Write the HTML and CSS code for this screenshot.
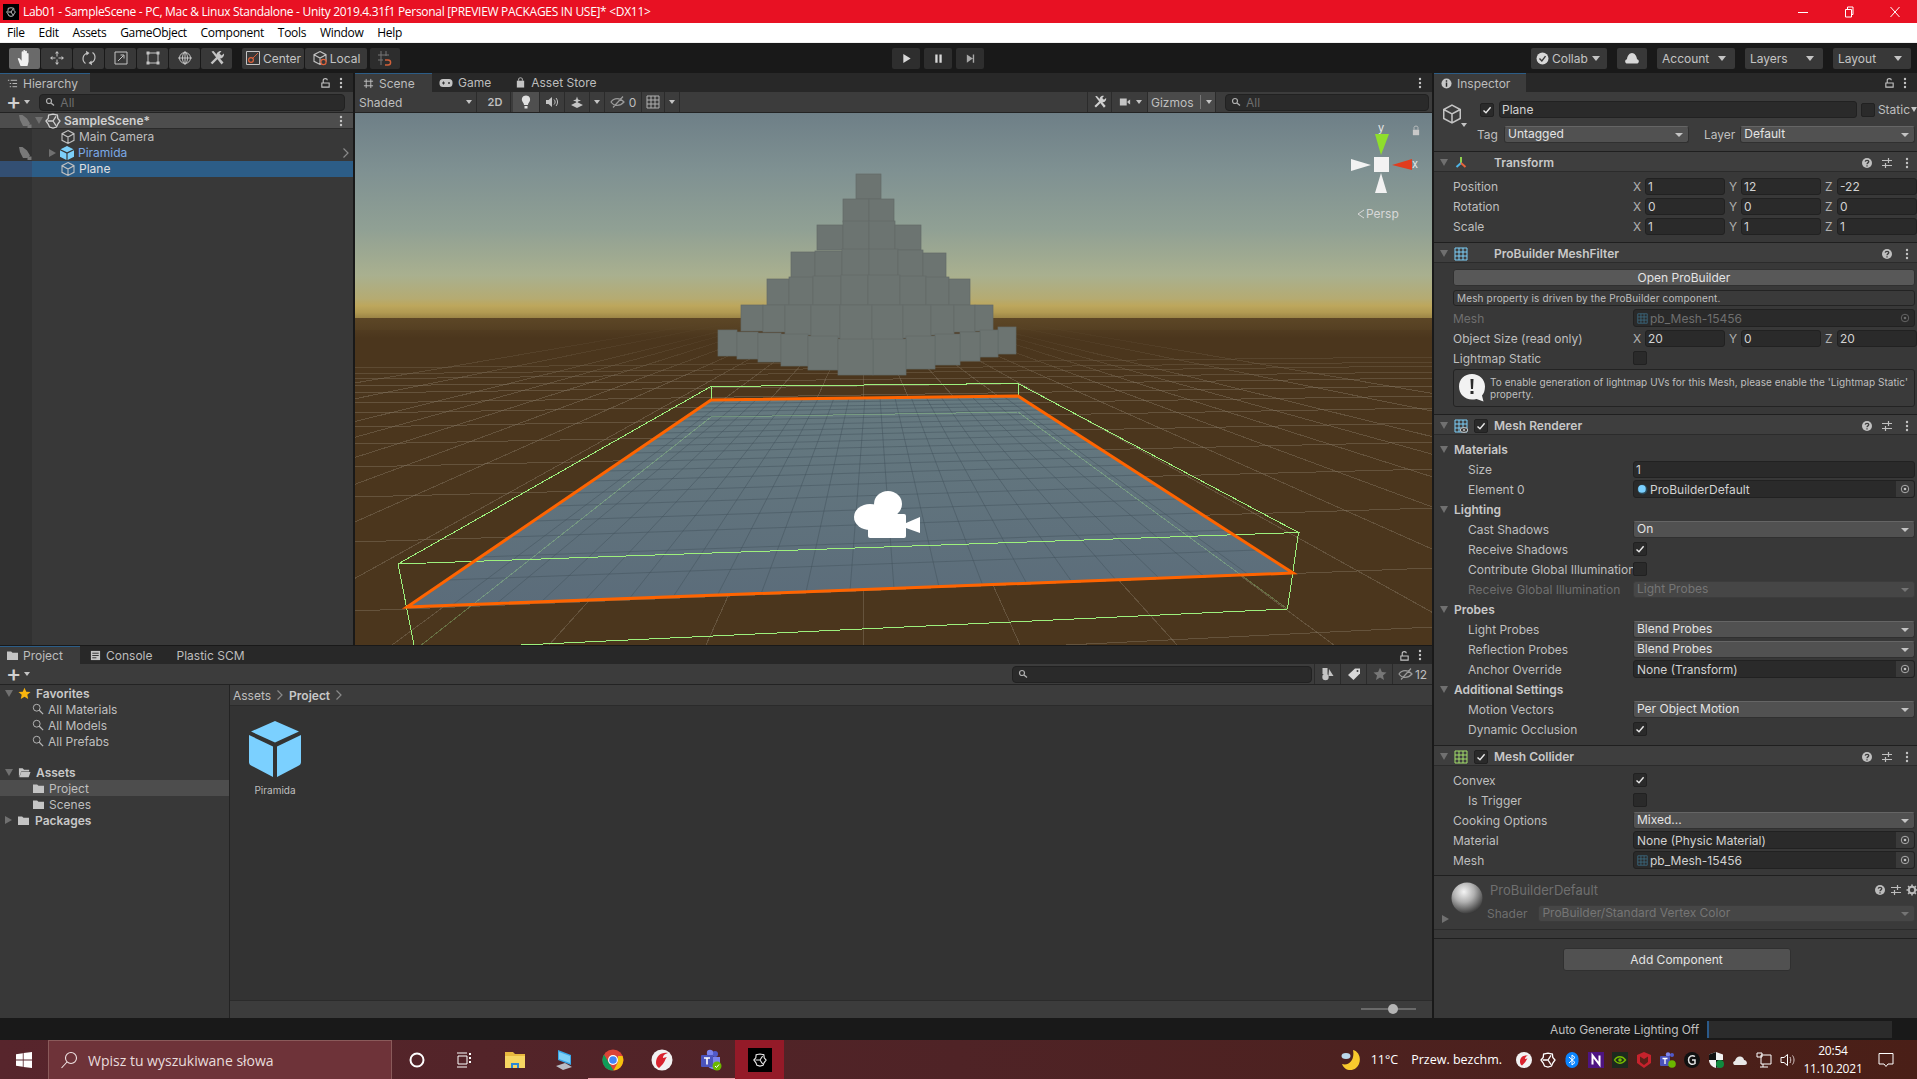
FILE: index.html
```html
<!DOCTYPE html>
<html lang="en">
<head>
    <meta charset="UTF-8">
    <title>Lab01 - SampleScene - Unity</title>
    <link rel="stylesheet" href="styles.css">
</head>
<body>
    <!-- shared icons -->
    <svg class="defs" xmlns="http://www.w3.org/2000/svg">
        <symbol id="i-cube" viewBox="0 0 16 16"><path d="M8 1.5 14 4.7V11.3L8 14.5 2 11.3V4.7zM2 4.7 8 8 14 4.7M8 8V14.5" fill="none" stroke="currentColor" stroke-width="1.1"/></symbol>
        <symbol id="i-prefab" viewBox="0 0 16 16"><path d="M8 1 14.5 4.2 8 7.3 1.5 4.2zM1 5.2 7.4 8.4V15L1 11.8zM15 5.2 8.6 8.4V15L15 11.8z" fill="#7dd0fa"/></symbol>
        <symbol id="i-kebab" viewBox="0 0 4 12"><circle cx="2" cy="2" r="1.2" fill="currentColor"/><circle cx="2" cy="6" r="1.2" fill="currentColor"/><circle cx="2" cy="10" r="1.2" fill="currentColor"/></symbol>
        <symbol id="i-lock" viewBox="0 0 12 12"><path d="M2 6.500H10V11H2zM3.500 6.500V3.500C3.500 1.200 8 1.200 8 3.500" fill="none" stroke="currentColor" stroke-width="1.2"/></symbol>
        <symbol id="i-help" viewBox="0 0 12 12"><circle cx="6" cy="6" r="5" fill="currentColor"/><path d="M4.200 4.600C4.400 2.800 7.800 2.900 7.800 4.600 7.800 5.900 6 5.800 6 7.200M6 8.200V9.600" fill="none" stroke="#3c3c3c" stroke-width="1.3"/></symbol>
        <symbol id="i-sliders" viewBox="0 0 12 12"><path d="M1 3.500H11M1 8.500H11M7.500 1V6M4.500 6V11" fill="none" stroke="currentColor" stroke-width="1.2"/></symbol>
        <symbol id="i-target" viewBox="0 0 12 12"><circle cx="6" cy="6" r="4.500" fill="none" stroke="currentColor"/><circle cx="6" cy="6" r="1.600" fill="currentColor"/></symbol>
        <symbol id="i-mesh" viewBox="0 0 14 14"><path d="M1 1H13V13H1zM1 5H13M1 9H13M5 1V13M9 1V13" fill="none" stroke="currentColor" stroke-width="1"/></symbol>
        <symbol id="i-check" viewBox="0 0 10 10"><path d="M1.500 5.400 4 7.800 8.600 2.200" fill="none" stroke="#e8e8e8" stroke-width="1.4"/></symbol>
        <symbol id="i-mag" viewBox="0 0 14 14"><circle cx="5.500" cy="5.500" r="4" fill="none" stroke="currentColor" stroke-width="1.1"/><path d="M8.500 8.500 13 13" stroke="currentColor" stroke-width="1.4"/></symbol>
        <symbol id="i-smag" viewBox="0 0 10 10"><circle cx="4" cy="4" r="2.500" fill="none" stroke="currentColor" stroke-width="1.2"/><path d="M6 6 9 8.500" stroke="currentColor" stroke-width="1.4"/></symbol>
        <symbol id="i-folder" viewBox="0 0 14 12"><path d="M1 1.500H5.500L7 3H13V11H1z" fill="currentColor"/></symbol>
        <symbol id="i-unity" viewBox="0 0 16 16"><path d="M8 1 10.500 3.200 14 3.600 14.800 8 14 12.400 10.500 12.800 8 15 5 12.800 2 11.500 1 8 2 4.500 5 3.200zM8 8V2.800M8 8 12.600 11M8 8 3.400 11" transform="rotate(-90 8 8)" fill="none" stroke="currentColor" stroke-width="1.3"/></symbol>
        <symbol id="i-hidden" viewBox="0 0 16 12"><path d="M1 6C4 1.500 10 1.500 14 6 10 10.500 4 10.500 1 6zM3 11.500 13 .5" fill="none" stroke="currentColor" stroke-width="1.2"/></symbol>
        <symbol id="i-tools" viewBox="0 0 16 16"><path d="M2.500 13.500 9.500 6.500" stroke="currentColor" stroke-width="2.4"/><path d="M7.500 6C7 3 9.500 .5 12.500 1L10.500 3.500 12.500 5.500 15 3.500C15.500 6.500 13 9 10 8.500z" fill="currentColor"/><path d="M2.500 1.500 4.500 1 14.500 12.500 12.500 14.500z" fill="currentColor"/></symbol>
        <symbol id="i-vis" viewBox="0 0 14 14"><path d="M1 1H4.500L9 4.500 12 9.500 9 12H5L2 6zM9.500 10.500H13.500V14H9.500z" fill="#787878"/></symbol>
    </svg>

    <div class="titlebar">
        <svg class="app-icon" viewBox="0 0 16 16"><rect width="16" height="16"/><use href="#i-unity" x="3" y="3" width="10" height="10"/></svg>
        <span class="title-text">Lab01 - SampleScene - PC, Mac &amp; Linux Standalone - Unity 2019.4.31f1 Personal [PREVIEW PACKAGES IN USE]* &lt;DX11&gt;</span>
        <div class="win-controls">
            <svg viewBox="0 0 12 12"><path d="M1 6.500H11" stroke="#fff"/></svg>
            <svg viewBox="0 0 12 12"><path d="M2.500 3.500H8.500V11H2.500zM4.500 3.500V1H10V8.500H8.500" fill="none" stroke="#fff"/></svg>
            <svg viewBox="0 0 12 12"><path d="M1.500 1 10.500 11M10.500 1 1.500 11" stroke="#fff"/></svg>
        </div>
    </div>

    <div class="menubar">
        <span>File</span><span>Edit</span><span>Assets</span><span>GameObject</span><span>Component</span><span>Tools</span><span>Window</span><span>Help</span>
    </div>

    <div class="toolbar">
        <div class="tool-group">
            <div class="tool active">
                <svg viewBox="0 0 16 16"><path d="M4 15 1.500 8.500C2.100 7.500 3.100 7.900 3.500 8.700L5 10.500V3C5 1.800 6.500 1.800 6.500 3V7 1.700C6.500 .5 8.100 .5 8.100 1.700V7 2.500C8.100 1.300 9.700 1.300 9.700 2.500V8 4.500C9.700 3.300 11.200 3.300 11.200 4.500V11L10.200 15z" fill="#f0f0f0"/></svg>
            </div>
            <div class="tool">
                <svg viewBox="0 0 16 16"><path d="M8 1 10 3.500H6zM8 15 6 12.500H10zM1 8 3.500 6V10zM15 8 12.500 10V6z" fill="#c4c4c4"/><path d="M8 3.500V6.500M8 9.500V12.500M3.500 8H6.500M9.500 8H12.500" stroke="#c4c4c4"/></svg>
            </div>
            <div class="tool">
                <svg viewBox="0 0 16 16"><path d="M4.500 13.500C.5 10.500 1.500 4.500 6.500 3M11.500 2.500C15.500 5.500 14.500 11.500 9.500 13" fill="none" stroke="#c4c4c4" stroke-width="1.2"/><path d="M5 .8 8.500 3 5.500 5.500zM11 15.200 7.500 13 10.500 10.500z" fill="#c4c4c4"/></svg>
            </div>
            <div class="tool">
                <svg viewBox="0 0 16 16"><path d="M2 2H14V14H2zM5 11 10.500 5.500M7.500 5H11V8.500" fill="none" stroke="#c4c4c4"/></svg>
            </div>
            <div class="tool">
                <svg viewBox="0 0 16 16"><path d="M3 3H13V13H3z" fill="none" stroke="#c4c4c4"/><path d="M1.500 1.500H4.500V4.500H1.500zM11.500 1.500H14.500V4.500H11.500zM1.500 11.500H4.500V14.500H1.500zM11.500 11.500H14.500V14.500H11.500z" fill="#c4c4c4"/></svg>
            </div>
            <div class="tool">
                <svg viewBox="0 0 16 16"><circle cx="8" cy="8" r="5.500" fill="none" stroke="#c4c4c4"/><ellipse cx="8" cy="8" rx="2.500" ry="5.500" fill="none" stroke="#c4c4c4"/><path d="M1 8H15M8 1V15" stroke="#c4c4c4"/></svg>
            </div>
            <div class="tool tools-ico">
                <svg><use href="#i-tools"/></svg>
            </div>
        </div>
        <div class="tool-group pivot-group">
            <div class="tool wide">
                <svg viewBox="0 0 16 16"><path d="M1.500 1.500H14.500V14.500H1.500z" fill="none" stroke="#c4c4c4"/><path d="M13 3 7 9" stroke="#d0603a"/><circle cx="6" cy="10" r="2.400" fill="none" stroke="#e0613a" stroke-width="1.2"/></svg>
                Center
            </div>
            <div class="tool wide">
                <svg viewBox="0 0 16 16"><use href="#i-cube"/><circle cx="11.500" cy="12" r="2.600" fill="#383838" stroke="#e0613a" stroke-width="1.2"/></svg>
                Local
            </div>
            <div class="tool snap">
                <svg viewBox="0 0 16 16"><path d="M4 1V15M9 1V6M1 5H12M1 10H6" stroke="#777"/><path d="M8 10H11C14.500 10 14.500 15 11 15H8" fill="none" stroke="#d0603a" stroke-width="1.4"/></svg>
            </div>
        </div>
        <div class="tool-group play-group">
            <div class="tool"><svg viewBox="0 0 12 12"><path d="M2.500 1V11L10.500 6z" fill="#d8d8d8"/></svg></div>
            <div class="tool"><svg viewBox="0 0 12 12"><path d="M2.500 1.500H5V10.500H2.500zM7 1.500H9.500V10.500H7z" fill="#d8d8d8"/></svg></div>
            <div class="tool"><svg viewBox="0 0 12 12"><path d="M2 1.500V10.500L8.500 6zM8.500 1.500H10V10.500H8.500z" fill="#a8a8a8"/></svg></div>
        </div>
        <div class="tool-group right-group">
            <div class="tool menu-btn collab">
                <svg viewBox="0 0 12 12"><circle cx="6" cy="6" r="5.500" fill="#d8d8d8"/><path d="M3.200 6 5.400 8.200 8.800 3.800" fill="none" stroke="#383838" stroke-width="1.3"/></svg>
                <span>Collab</span><i class="arrow"></i>
            </div>
            <div class="tool cloud">
                <svg viewBox="0 0 16 12"><path d="M3.500 11.500C.5 11.500 .5 7.500 3 7.200 3.200 4 5.500 1 8 1S12.800 4 13 7.200C15.500 7.500 15.500 11.500 12.500 11.500z" fill="#d8d8d8"/></svg>
            </div>
            <div class="tool menu-btn account"><span>Account</span><i class="arrow"></i></div>
            <div class="tool menu-btn layers"><span>Layers</span><i class="arrow"></i></div>
            <div class="tool menu-btn layout"><span>Layout</span><i class="arrow"></i></div>
        </div>
    </div>

    <div class="workspace">
        <div class="left-col">
            <div class="top-row">
                <section class="hierarchy">
                    <div class="tabs">
                        <div class="tab active">
                            <svg class="tab-icon" viewBox="0 0 12 12"><path d="M1 2.500H2.500M4 2.500H11M3 6H4.500M6 6H11M3 9.500H4.500M6 9.500H11" stroke="#c4c4c4"/></svg>
                            Hierarchy
                        </div>
                        <div class="tab-tools">
                            <svg class="ico-lock"><use href="#i-lock"/></svg>
                            <svg class="ico-kebab"><use href="#i-kebab"/></svg>
                        </div>
                    </div>
                    <div class="panel-bar">
                        <span class="plus">+</span><i class="arrow"></i>
                        <div class="search">
                            <svg class="ico-smag"><use href="#i-smag"/></svg>
                            <span>All</span>
                        </div>
                    </div>
                    <div class="tree">
                        <div class="scene-row">
                            <svg class="ico-vis"><use href="#i-vis"/></svg>
                            <i class="tri down"></i>
                            <svg class="ico-16"><use href="#i-unity"/></svg>
                            <b>SampleScene*</b>
                            <svg class="ico-kebab push"><use href="#i-kebab"/></svg>
                        </div>
                        <div class="go-row">
                            <span class="gutter"></span>
                            <svg class="ico-16"><use href="#i-cube"/></svg>
                            <span>Main Camera</span>
                        </div>
                        <div class="go-row prefab">
                            <span class="gutter"><svg class="ico-vis"><use href="#i-vis"/></svg></span>
                            <i class="tri right"></i>
                            <svg class="ico-16"><use href="#i-prefab"/></svg>
                            <span>Piramida</span>
                            <svg class="chev push" viewBox="0 0 8 12"><path d="M1.500 1.500 6 6 1.500 10.500" fill="none" stroke="#8a8a8a" stroke-width="1.2"/></svg>
                        </div>
                        <div class="go-row selected">
                            <span class="gutter"></span>
                            <svg class="ico-16"><use href="#i-cube"/></svg>
                            <span>Plane</span>
                        </div>
                    </div>
                </section>

                <section class="scene">
                    <div class="tabs">
                        <div class="tab active scene-tab">
                            <svg class="tab-icon" viewBox="0 0 12 12"><path d="M3.500 1V11M8.500 1V11M1 3.500H11M1 8.500H11" stroke="#c4c4c4"/></svg>
                            Scene
                        </div>
                        <div class="tab game-tab">
                            <svg class="tab-icon pad" viewBox="0 0 14 10"><rect x=".5" y="1" width="13" height="8" rx="3.500" fill="#c4c4c4"/><path d="M3 5H6M4.500 3.500V6.500" stroke="#333"/><circle cx="10" cy="5" r="1" fill="#333"/></svg>
                            Game
                        </div>
                        <div class="tab store-tab">
                            <svg class="tab-icon" viewBox="0 0 12 12"><path d="M2 4H10V11.500H2z" fill="#c4c4c4"/><path d="M4 4V2C4 .5 8 .5 8 2V4" fill="none" stroke="#c4c4c4"/></svg>
                            Asset Store
                        </div>
                        <div class="tab-tools"><svg class="ico-kebab"><use href="#i-kebab"/></svg></div>
                    </div>
                    <div class="panel-bar scene-bar">
                        <div class="bar-item shaded">Shaded<i class="arrow"></i></div>
                        <div class="bar-item two-d">2D</div>
                        <div class="bar-item on lamp"><svg class="ico-14" viewBox="0 0 14 14"><path d="M7 .5C3.500 .5 2.500 3.500 3 5.500 3.500 7.500 5 8 5 10H9C9 8 10.500 7.500 11 5.500 11.500 3.500 10.500 .5 7 .5zM5.500 11H8.500V13.500H5.500z" fill="#e0e0e0"/></svg></div>
                        <div class="bar-item audio"><svg class="ico-14" viewBox="0 0 14 14"><path d="M1 5H3.500L7 2V12L3.500 9H1z" fill="#c4c4c4"/><path d="M9 4.500C10.500 6 10.500 8 9 9.500M11 3C13 5.500 13 8.500 11 11" fill="none" stroke="#c4c4c4"/></svg></div>
                        <div class="bar-item fx"><svg class="ico-14" viewBox="0 0 14 14"><path d="M7 7 13 10 7 13 1 10zM7 1.500 8 4.500 11 5.500 8 6.500 7 9.500 6 6.500 3 5.500 6 4.500z" fill="#c4c4c4"/></svg></div>
                        <div class="bar-item fx-arrow"><i class="arrow"></i></div>
                        <div class="bar-item hidden-count"><svg class="ico-hidden"><use href="#i-hidden"/></svg>0</div>
                        <div class="bar-item grid-btn"><svg class="ico-14" viewBox="0 0 14 14"><path d="M1 1H13V13H1zM1 5H13M1 9H13M5 1V13M9 1V13" fill="none" stroke="#b0b0b0"/></svg></div>
                        <div class="bar-item fx-arrow"><i class="arrow"></i></div>
                        <div class="bar-item tools-btn push"><svg class="ico-14"><use href="#i-tools"/></svg></div>
                        <div class="bar-item cam-btn"><svg class="ico-14" viewBox="0 0 14 10"><path d="M1 1H9V9H1zM10 4 13 2V8L10 6z" fill="#c4c4c4"/></svg><i class="arrow"></i></div>
                        <div class="bar-item gizmos">Gizmos<i class="bar-sep"></i><i class="arrow"></i></div>
                        <div class="search scene-search">
                            <svg class="ico-smag"><use href="#i-smag"/></svg>
                            <span>All</span>
                        </div>
                    </div>
                    <div class="viewport">
                        <svg class="scene-view" viewBox="355 113 1077 532" xmlns="http://www.w3.org/2000/svg">
                            <defs>
                                <linearGradient id="sky" x1="0" y1="113" x2="0" y2="345" gradientUnits="userSpaceOnUse">
                                    <stop offset="0" stop-color="#6e7f87"/>
                                    <stop offset=".25" stop-color="#7f9192"/>
                                    <stop offset=".5" stop-color="#90a094"/>
                                    <stop offset=".7" stop-color="#a9b08f"/>
                                    <stop offset=".8" stop-color="#b5ab72"/>
                                    <stop offset=".83" stop-color="#bda75d"/>
                                    <stop offset=".86" stop-color="#b19a52"/>
                                    <stop offset=".92" stop-color="#7a6334"/>
                                    <stop offset="1" stop-color="#4b361d"/>
                                </linearGradient>
                                <linearGradient id="fog" x1="0" y1="318" x2="0" y2="385" gradientUnits="userSpaceOnUse">
                                    <stop offset="0" stop-color="#5c4626"/>
                                    <stop offset=".3" stop-color="#4b361d" stop-opacity=".85"/>
                                    <stop offset="1" stop-color="#4b361d" stop-opacity="0"/>
                                </linearGradient>
                                <linearGradient id="planeFill" x1="0" y1="396" x2="0" y2="607" gradientUnits="userSpaceOnUse">
                                    <stop offset="0" stop-color="#667a80"/>
                                    <stop offset="1" stop-color="#5b6c7a"/>
                                </linearGradient>
                            </defs>
                            <rect class="sky" x="355" y="113" width="1077" height="232"/>
                            <rect class="ground" x="355" y="330" width="1077" height="315"/>

                            <!-- floor grid, converges on 863,296 -->
                            <path class="floor-lines" d="M355 680 1432 627M355 611 1432 568M355 542 1432 508M355 497 1432 469M355 467 1432 442M355 444 1432 423M355 427 1432 408M355 413 1432 396M355 403 1432 386M355 393 1432 378M355 386 1432 372M355 379 1432 366M355 374 1432 362M355 368 1432 357"/>
                            <path class="floor-lines" d="M863 325V645M876 325 1020 645M889 325 1177 645M902 325 1334 645M915 325 1491 645M928 325 1648 645M941 325 1805 645M954 325 1962 645M967 325 2119 645M980 325 2276 645M1006 325 2590 645M1032 325 2904 645M850 325 706 645M837 325 549 645M824 325 392 645M811 325 235 645M798 325 78 645M785 325-79 645M772 325-236 645M759 325-393 645M746 325-550 645M720 325-864 645M694 325-1178 645"/>
                            <rect class="fog" x="355" y="318" width="1077" height="67"/>

                            <!-- piramida, back row first -->
                            <g class="blocks">
                                <rect x="856" y="174" width="25" height="25"/>
                                <rect x="843" y="199" width="26" height="23"/><rect x="869" y="199" width="25" height="23"/>
                                <rect x="817" y="225" width="26" height="25"/><rect x="843" y="221" width="26" height="29"/><rect x="869" y="221" width="26" height="29"/><rect x="895" y="225" width="26" height="25"/>
                                <rect x="791" y="252" width="24" height="26"/><rect x="815" y="251" width="27" height="27"/><rect x="842" y="249" width="27" height="29"/><rect x="869" y="249" width="29" height="29"/><rect x="898" y="250" width="25" height="28"/><rect x="923" y="253" width="23" height="25"/>
                                <rect x="767" y="279" width="22" height="26"/><rect x="789" y="277" width="24" height="28"/><rect x="813" y="276" width="28" height="29"/><rect x="841" y="275" width="27" height="30"/><rect x="868" y="275" width="32" height="30"/><rect x="900" y="276" width="26" height="29"/><rect x="926" y="277" width="23" height="28"/><rect x="949" y="279" width="21" height="26"/>
                                <rect x="741" y="305" width="22" height="26"/><rect x="763" y="305" width="22" height="27"/><rect x="785" y="305" width="26" height="30"/><rect x="811" y="305" width="29" height="33"/><rect x="840" y="305" width="32" height="36"/><rect x="872" y="305" width="31" height="36"/><rect x="903" y="305" width="28" height="33"/><rect x="931" y="305" width="23" height="30"/><rect x="954" y="305" width="21" height="27"/><rect x="975" y="305" width="18" height="26"/>
                                <rect x="998" y="327" width="18" height="27"/><rect x="718" y="330" width="19" height="26"/>
                                <rect x="980" y="330" width="18" height="27"/><rect x="737" y="332" width="21" height="27"/>
                                <rect x="960" y="332" width="20" height="29"/><rect x="758" y="333" width="23" height="29"/>
                                <rect x="935" y="334" width="25" height="31"/><rect x="781" y="334" width="27" height="32"/>
                                <rect x="906" y="336" width="29" height="33"/><rect x="808" y="336" width="30" height="34"/>
                                <rect x="873" y="339" width="33" height="36"/><rect x="838" y="339" width="35" height="36"/>
                            </g>

                            <polygon class="plane" points="711,400 1018,396 1293,573 407,607"/>
                            <path class="plane-grid" d="M726 400 451 606M742 400 496 604M757 399 540 603M772 399 584 601M788 399 629 599M803 399 673 597M818 399 717 596M834 398 761 594M849 398 806 592M865 398 850 591M880 398 894 589M895 398 939 587M911 397 983 586M926 397 1027 584M941 397 1072 582M957 397 1116 580M972 397 1160 579M987 396 1205 577M1003 396 1249 575"/>
                            <path class="plane-grid" d="M706 404 1023 399M700 408 1028 403M693 412 1034 406M687 417 1040 410M680 421 1046 414M672 427 1054 419M663 433 1061 424M654 439 1070 429M644 446 1079 435M633 453 1089 442M621 462 1100 449M607 471 1112 457M592 481 1126 465M575 493 1141 475M556 506 1158 486M534 521 1178 499M510 537 1200 513M481 557 1226 530M447 580 1257 550"/>
                            <path class="box-faint" d="M711 417 1018 412M711 417 415 650M1018 412 1287.500 609"/>
                            <path class="box-edge" d="M711 386.500 1018 383.500 1298.500 532.500 398 564zM711 386.500V400M1018 383.500V396M398 564 415 650 1287.500 609 1298.500 532.500"/>
                            <polygon class="plane-outline" points="711,400 1018,396 1293,573 407,607"/>

                            <!-- gizmo of the main camera -->
                            <g class="cam-gizmo">
                                <ellipse cx="870" cy="517" rx="16" ry="13"/>
                                <ellipse cx="888" cy="504" rx="14" ry="13"/>
                                <rect x="868" y="514" width="38" height="24" rx="2"/>
                                <path d="M906 523 920 517V533L906 528z"/>
                            </g>

                            <!-- orientation gizmo -->
                            <path class="giz-y" d="M1375 134H1389L1381 155z"/>
                            <path class="giz-x" d="M1412 159V170L1392 165z"/>
                            <path class="giz-w" d="M1351 159V171L1371 165zM1375 193H1387L1381 173z"/>
                            <rect class="giz-w" x="1374" y="157" width="15" height="15"/>
                        </svg>
                        <span class="giz-label giz-y-label">y</span>
                        <span class="giz-label giz-x-label">x</span>
                        <svg class="giz-lock" viewBox="0 0 10 14"><path d="M1 6H9V13H1z" fill="#c8c8c8"/><path d="M2.500 6V3C2.500 .8 7.500 .8 7.500 3V6" fill="none" stroke="#c8c8c8"/></svg>
                        <span class="persp"><svg viewBox="0 0 8 10"><path d="M7 1 1 5 7 9" fill="none" stroke="#d8d8d8"/></svg>Persp</span>
                    </div>
                </section>
            </div>

            <section class="project">
                <div class="tabs">
                    <div class="tab active project-tab">
                        <svg class="ico-folder"><use href="#i-folder"/></svg>
                        Project
                    </div>
                    <div class="tab console-tab">
                        <svg class="tab-icon" viewBox="0 0 12 12"><path d="M1 1H11V11H1z" fill="#c4c4c4"/><path d="M2.500 3.500H9.500M2.500 6H9.500M2.500 8.500H7" stroke="#2a2a2a"/></svg>
                        Console
                    </div>
                    <div class="tab plastic-tab">Plastic SCM</div>
                    <div class="tab-tools">
                        <svg class="ico-lock"><use href="#i-lock"/></svg>
                        <svg class="ico-kebab"><use href="#i-kebab"/></svg>
                    </div>
                </div>
                <div class="panel-bar project-bar">
                    <span class="plus">+</span><i class="arrow"></i>
                    <div class="search project-search"><svg class="ico-smag"><use href="#i-smag"/></svg></div>
                    <div class="filter"><svg class="ico-14" viewBox="0 0 14 14"><rect x="1.500" y="1" width="5" height="6" fill="#c4c4c4"/><circle cx="4.500" cy="10" r="3.200" fill="#c4c4c4"/><path d="M8 2 12.500 9H7.500z" fill="#c4c4c4"/></svg></div>
                    <div class="filter"><svg class="ico-14" viewBox="0 0 14 14"><path d="M1 8 8 1.500H13V6.500L6.500 13z" fill="#d8d8d8"/><circle cx="10.500" cy="4" r="1" fill="#3c3c3c"/></svg></div>
                    <div class="filter"><svg class="ico-14" viewBox="0 0 14 14"><path d="M7 .8 8.900 5 13.500 5.400 10 8.400 11 13 7 10.600 3 13 4 8.400 .5 5.400 5.100 5z" fill="#777"/></svg></div>
                    <div class="filter count"><svg class="ico-hidden"><use href="#i-hidden"/></svg>12</div>
                </div>
                <div class="project-body">
                    <div class="folders">
                        <div class="folder-row root"><i class="tri down"></i><svg class="ico-star" viewBox="0 0 14 14"><path d="M7 .8 8.900 5 13.500 5.400 10 8.400 11 13 7 10.600 3 13 4 8.400 .5 5.400 5.100 5z" fill="#f8b50e"/></svg><b>Favorites</b></div>
                        <div class="folder-row sub"><svg class="ico-mag"><use href="#i-mag"/></svg>All Materials</div>
                        <div class="folder-row sub"><svg class="ico-mag"><use href="#i-mag"/></svg>All Models</div>
                        <div class="folder-row sub"><svg class="ico-mag"><use href="#i-mag"/></svg>All Prefabs</div>
                        <div class="folder-gap"></div>
                        <div class="folder-row root"><i class="tri down"></i><svg class="ico-star" viewBox="0 0 14 12"><path d="M1 1.500H5L6.500 3H12V5H3.500L1 11zM3.500 5.500H13.500L11.500 11H1.500z" fill="#c4c4c4"/></svg><b>Assets</b></div>
                        <div class="folder-row sub current"><svg class="ico-folder"><use href="#i-folder"/></svg>Project</div>
                        <div class="folder-row sub"><svg class="ico-folder"><use href="#i-folder"/></svg>Scenes</div>
                        <div class="folder-row root"><i class="tri right"></i><svg class="ico-folder"><use href="#i-folder"/></svg><b>Packages</b></div>
                    </div>
                    <div class="assets">
                        <div class="crumbs">
                            <span>Assets</span>
                            <svg class="chev" viewBox="0 0 8 12"><path d="M1.500 1.500 6 6 1.500 10.500" fill="none" stroke="#8a8a8a" stroke-width="1.2"/></svg>
                            <b>Project</b>
                            <svg class="chev" viewBox="0 0 8 12"><path d="M1.500 1.500 6 6 1.500 10.500" fill="none" stroke="#8a8a8a" stroke-width="1.2"/></svg>
                        </div>
                        <div class="asset-grid">
                            <div class="asset">
                                <svg class="asset-cube" viewBox="0 0 52 56"><path d="M26 0 50 10.500 26 21.500 2 10.500zM0 14 24 25.500V56L3 45C1 44 0 43 0 41zM52 14 28 25.500V56L49 45C51 44 52 43 52 41z" fill="#7bd0ff"/></svg>
                                <span>Piramida</span>
                            </div>
                        </div>
                        <div class="asset-foot">
                            <div class="slider"><i></i></div>
                        </div>
                    </div>
                </div>
            </section>
        </div>

        <aside class="inspector">
            <div class="tabs">
                <div class="tab active inspector-tab">
                    <svg class="tab-icon" viewBox="0 0 12 12"><circle cx="6" cy="6" r="5.500" fill="#c8c8c8"/><path d="M6 2.500V4M6 5V9.500" stroke="#2a2a2a" stroke-width="1.6"/></svg>
                    Inspector
                </div>
                <div class="tab-tools">
                    <svg class="ico-lock"><use href="#i-lock"/></svg>
                    <svg class="ico-kebab"><use href="#i-kebab"/></svg>
                </div>
            </div>

            <div class="object-head">
                <div class="object-line">
                    <div class="cube-wrap">
                        <svg class="object-cube"><use href="#i-cube"/></svg>
                        <i class="arrow cube-arrow"></i>
                    </div>
                    <span class="check on"><svg><use href="#i-check"/></svg></span>
                    <div class="field name-field">Plane</div>
                    <span class="check static-check"></span>
                    <span class="static-label">Static</span>
                    <i class="arrow"></i>
                </div>
                <div class="tag-line">
                    <span class="tag-label">Tag</span>
                    <div class="drop tag-drop">Untagged</div>
                    <span class="layer-label">Layer</span>
                    <div class="drop layer-drop">Default</div>
                </div>
            </div>

            <div class="comp">
                <div class="comp-head">
                    <i class="tri down"></i>
                    <svg class="comp-icon" viewBox="0 0 14 14"><path d="M7 1V7" stroke="#8fd14f" stroke-width="2"/><path d="M7 7 2.500 11" stroke="#4db5e8" stroke-width="2"/><path d="M7 7 11.500 11" stroke="#e8643c" stroke-width="2"/></svg>
                    <span class="comp-check"></span>
                    <b>Transform</b>
                    <div class="comp-tools">
                        <svg class="ico-help"><use href="#i-help"/></svg>
                        <svg class="ico-slide"><use href="#i-sliders"/></svg>
                        <svg class="ico-kebab"><use href="#i-kebab"/></svg>
                    </div>
                </div>
                <div class="comp-body transform-body">
                    <div class="row"><label>Position</label><div class="xyz"><em>X</em><div class="field">1</div><em>Y</em><div class="field">12</div><em>Z</em><div class="field">-22</div></div></div>
                    <div class="row"><label>Rotation</label><div class="xyz"><em>X</em><div class="field">0</div><em>Y</em><div class="field">0</div><em>Z</em><div class="field">0</div></div></div>
                    <div class="row"><label>Scale</label><div class="xyz"><em>X</em><div class="field">1</div><em>Y</em><div class="field">1</div><em>Z</em><div class="field">1</div></div></div>
                </div>
            </div>

            <div class="comp">
                <div class="comp-head">
                    <i class="tri down"></i>
                    <svg class="comp-icon mesh-blue"><use href="#i-mesh"/></svg>
                    <span class="comp-check"></span>
                    <b>ProBuilder MeshFilter</b>
                    <div class="comp-tools">
                        <svg class="ico-help"><use href="#i-help"/></svg>
                        <svg class="ico-kebab"><use href="#i-kebab"/></svg>
                    </div>
                </div>
                <div class="comp-body filter-body">
                    <div class="wide-btn">Open ProBuilder</div>
                    <div class="note">Mesh property is driven by the ProBuilder component.</div>
                    <div class="row dim first-row"><label>Mesh</label><div class="obj"><svg class="obj-mesh"><use href="#i-mesh"/></svg><span>pb_Mesh-15456</span><span class="target"><svg><use href="#i-target"/></svg></span></div></div>
                    <div class="row"><label>Object Size (read only)</label><div class="xyz"><em>X</em><div class="field">20</div><em>Y</em><div class="field">0</div><em>Z</em><div class="field">20</div></div></div>
                    <div class="row"><label>Lightmap Static</label><span class="check"></span></div>
                    <div class="helpbox">
                        <svg class="help-bubble" viewBox="0 0 26 28"><path d="M13 0C20 0 26 5 26 12.500 26 17 24.500 20 23 21.500L24.500 27.500 17.500 25C16 25.500 14.500 25.500 13 25.500 5.500 25.500 0 20 0 12.500 0 5 5.500 0 13 0z" fill="#f2f2f2"/><path d="M11.500 5H14.500L14 15H12zM11.500 17H14.500V20H11.500z" fill="#2c2c2c"/></svg>
                        <p>To enable generation of lightmap UVs for this Mesh, please enable the 'Lightmap Static' property.</p>
                    </div>
                </div>
            </div>

            <div class="comp">
                <div class="comp-head">
                    <i class="tri down"></i>
                    <svg class="comp-icon mesh-blue" viewBox="0 0 14 14"><use href="#i-mesh"/><ellipse cx="10" cy="11" rx="3.800" ry="2.400" fill="#3c3c3c" stroke="#c8c8c8"/><circle cx="10" cy="11" r="1" fill="#c8c8c8"/></svg>
                    <span class="comp-check"><span class="check on"><svg><use href="#i-check"/></svg></span></span>
                    <b>Mesh Renderer</b>
                    <div class="comp-tools">
                        <svg class="ico-help"><use href="#i-help"/></svg>
                        <svg class="ico-slide"><use href="#i-sliders"/></svg>
                        <svg class="ico-kebab"><use href="#i-kebab"/></svg>
                    </div>
                </div>
                <div class="comp-body renderer-body">
                    <div class="row fold"><i class="tri down"></i><b>Materials</b></div>
                    <div class="row lvl"><label>Size</label><div class="field grow">1</div></div>
                    <div class="row lvl"><label>Element 0</label><div class="obj bright"><svg class="obj-ball" viewBox="0 0 10 10"><circle cx="5" cy="5" r="4.500" fill="#2a4a5a"/><circle cx="4.500" cy="4.500" r="3.500" fill="#7bd0ff"/></svg><span>ProBuilderDefault</span><span class="target"><svg><use href="#i-target"/></svg></span></div></div>
                    <div class="row fold"><i class="tri down"></i><b>Lighting</b></div>
                    <div class="row lvl"><label>Cast Shadows</label><div class="drop grow">On</div></div>
                    <div class="row lvl"><label>Receive Shadows</label><span class="check on"><svg><use href="#i-check"/></svg></span></div>
                    <div class="row lvl"><label>Contribute Global Illumination</label><span class="check"></span></div>
                    <div class="row lvl dim"><label>Receive Global Illumination</label><div class="drop grow off">Light Probes</div></div>
                    <div class="row fold"><i class="tri down"></i><b>Probes</b></div>
                    <div class="row lvl"><label>Light Probes</label><div class="drop grow">Blend Probes</div></div>
                    <div class="row lvl"><label>Reflection Probes</label><div class="drop grow">Blend Probes</div></div>
                    <div class="row lvl"><label>Anchor Override</label><div class="obj bright"><span class="none">None (Transform)</span><span class="target"><svg><use href="#i-target"/></svg></span></div></div>
                    <div class="row fold"><i class="tri down"></i><b>Additional Settings</b></div>
                    <div class="row lvl"><label>Motion Vectors</label><div class="drop grow">Per Object Motion</div></div>
                    <div class="row lvl"><label>Dynamic Occlusion</label><span class="check on"><svg><use href="#i-check"/></svg></span></div>
                </div>
            </div>

            <div class="comp">
                <div class="comp-head">
                    <i class="tri down"></i>
                    <svg class="comp-icon mesh-green"><use href="#i-mesh"/></svg>
                    <span class="comp-check"><span class="check on"><svg><use href="#i-check"/></svg></span></span>
                    <b>Mesh Collider</b>
                    <div class="comp-tools">
                        <svg class="ico-help"><use href="#i-help"/></svg>
                        <svg class="ico-slide"><use href="#i-sliders"/></svg>
                        <svg class="ico-kebab"><use href="#i-kebab"/></svg>
                    </div>
                </div>
                <div class="comp-body collider-body">
                    <div class="row"><label>Convex</label><span class="check on"><svg><use href="#i-check"/></svg></span></div>
                    <div class="row lvl"><label>Is Trigger</label><span class="check"></span></div>
                    <div class="row"><label>Cooking Options</label><div class="drop grow">Mixed...</div></div>
                    <div class="row"><label>Material</label><div class="obj bright"><span class="none">None (Physic Material)</span><span class="target"><svg><use href="#i-target"/></svg></span></div></div>
                    <div class="row"><label>Mesh</label><div class="obj bright"><svg class="obj-mesh"><use href="#i-mesh"/></svg><span>pb_Mesh-15456</span><span class="target"><svg><use href="#i-target"/></svg></span></div></div>
                </div>
            </div>

            <div class="comp material">
                <div class="mat-thumb">
                    <svg class="sphere" viewBox="0 0 32 32">
                        <defs>
                            <radialGradient id="ball" cx=".4" cy=".3" r=".75">
                                <stop offset="0" stop-color="#f4f4f4"/>
                                <stop offset=".45" stop-color="#b0b0b0"/>
                                <stop offset="1" stop-color="#303030"/>
                            </radialGradient>
                        </defs>
                        <circle cx="16" cy="16" r="15.500" fill="url(#ball)"/>
                    </svg>
                    <i class="tri right"></i>
                </div>
                <div class="mat-body">
                    <div class="mat-title">
                        <span>ProBuilderDefault</span>
                        <div class="mat-tools">
                            <svg class="ico-help"><use href="#i-help"/></svg>
                            <svg class="ico-slide"><use href="#i-sliders"/></svg>
                            <svg class="ico-gear" viewBox="0 0 12 12"><circle cx="6" cy="6" r="3.200" fill="none" stroke="currentColor" stroke-width="2"/><path d="M6 .5V2.500M6 9.500V11.500M.5 6H2.500M9.500 6H11.500M2.100 2.100 3.500 3.500M8.500 8.500 9.900 9.900M9.900 2.100 8.500 3.500M3.500 8.500 2.100 9.900" stroke="currentColor" stroke-width="1.6"/></svg>
                        </div>
                    </div>
                    <div class="mat-shader">
                        <span>Shader</span>
                        <div class="drop grow off shader-drop">ProBuilder/Standard Vertex Color</div>
                    </div>
                </div>
            </div>

            <div class="add-wrap">
                <div class="add-btn">Add Component</div>
            </div>
        </aside>
    </div>

    <div class="statusbar">
        <span>Auto Generate Lighting Off</span>
        <div class="progress"></div>
    </div>

    <div class="taskbar">
        <div class="start">
            <svg viewBox="0 0 16 16"><path d="M0 2.200 6.800 1.200V7.600H0zM7.600 1.100 16 0V7.600H7.600zM0 8.400H6.800V14.800L0 13.800zM7.600 8.400H16V16L7.600 14.900z" fill="#fff"/></svg>
        </div>
        <div class="task-search">
            <svg viewBox="0 0 18 18"><circle cx="11" cy="7" r="5.500" fill="none" stroke="#f0e4e4" stroke-width="1.1"/><path d="M7 11 1.500 17" stroke="#f0e4e4" stroke-width="1.1"/></svg>
            <span>Wpisz tu wyszukiwane słowa</span>
        </div>
        <div class="slot cortana"><svg viewBox="0 0 16 16"><circle cx="8" cy="8" r="6.500" fill="none" stroke="#fff" stroke-width="2"/></svg></div>
        <div class="slot task-view"><svg viewBox="0 0 16 16"><path d="M1 1H11M1 15H11M2 4H11V12H2z" fill="none" stroke="#fff"/><path d="M13 1H15V3H13zM13 5H15V7H13zM13 9H15V11H13z" fill="#fff"/></svg></div>
        <div class="slot explorer"><svg viewBox="0 0 22 22"><path d="M1 3H9L11 5H21V19H1z" fill="#e8b93f"/><path d="M1 7H21V19H1z" fill="#f6d662"/><path d="M7 14H15V19H13V16H9V19H7z" fill="#2a88d8"/></svg></div>
        <div class="slot"><svg viewBox="0 0 22 22"><path d="M5 1 18 6V16L5 11z" fill="#39a7e8"/><path d="M6 3 17 7V14L6 10z" fill="#7fd0f5"/><path d="M3 17 12 14 19 18 10 21z" fill="#b8bcc4"/></svg></div>
        <div class="slot lit">
            <svg viewBox="0 0 22 22"><circle cx="11" cy="11" r="10.500" fill="#db4437"/><path d="M2 5.500 7 14 11.500 21.500A10.500 10.500 0 0 1 2 5.500z" fill="#0f9d58"/><path d="M20.500 7A10.500 10.500 0 0 1 11.500 21.500L16 13V7z" fill="#f4c20d"/><circle cx="11" cy="11" r="5" fill="#fff"/><circle cx="11" cy="11" r="3.800" fill="#4285f4"/></svg>
        </div>
        <div class="slot lit">
            <svg viewBox="0 0 22 22"><circle cx="11" cy="11" r="10.500" fill="#f2f2f2"/><path d="M5 14C5 7 10 3 17 4 13 5 12 7 12 9L16 8C14 10 14 13 11 16L8 19C6.500 18 5 16 5 14z" fill="#d9232e"/></svg>
        </div>
        <div class="slot lit">
            <svg viewBox="0 0 22 22"><circle cx="15" cy="5" r="3" fill="#5059c9"/><circle cx="10" cy="4" r="3.200" fill="#7b83eb"/><path d="M7 8H20V16C20 20 15 21 12 20 9 19 7 17 7 13z" fill="#7b83eb"/><rect x="1" y="6" width="12" height="12" rx="1" fill="#4b53bc"/><path d="M4 9H10M7 9V15.500" stroke="#fff" stroke-width="1.6"/><circle cx="17" cy="17" r="4.500" fill="#6bb700"/><path d="M15 17 16.500 18.500 19 15.500" fill="none" stroke="#fff"/></svg>
        </div>
        <div class="slot active-app">
            <svg viewBox="0 0 24 24"><rect width="24" height="24" fill="#000"/><use href="#i-unity" x="5" y="5" width="14" height="14" color="#e8e8e8"/></svg>
        </div>

        <div class="weather">
            <svg viewBox="0 0 20 22"><path d="M12 1C20 3 21 14 15 19 10 23 3 21 1 15 8 17 14 11 12 1z" fill="#f8c92d"/><ellipse cx="5" cy="7" rx="4.500" ry="3" fill="#bcd9ec"/></svg>
            <span class="temp">11°C</span>
            <span class="cond">Przew. bezchm.</span>
        </div>
        <div class="tray">
            <svg viewBox="0 0 16 16"><circle cx="8" cy="8" r="8" fill="#f2f2f2"/><path d="M4 10C4 5 7 3 12 3.500 9.500 4.500 9 6 9 7L11.500 6.500C10 8 10 10 8 11.500L6 13.500C5 13 4 11.500 4 10z" fill="#d9232e"/></svg>
            <svg class="tray-unity"><use href="#i-unity"/></svg>
            <svg viewBox="0 0 16 16"><rect x="1.500" width="13" height="16" rx="6.500" fill="#0a84ff"/><path d="M5 5 11 10.500 8 13V3L11 5.500 5 11" fill="none" stroke="#fff"/></svg>
            <svg viewBox="0 0 16 16"><rect width="16" height="16" fill="#4e1482"/><path d="M4.500 12.500V3.500L11.500 12.500V3.500" fill="none" stroke="#fff" stroke-width="2"/></svg>
            <svg viewBox="0 0 16 16"><rect width="16" height="16" fill="#1d2a1e"/><path d="M2.500 8C5 4 10 3.500 13.500 8 10 12.500 5 12 2.500 8z" fill="none" stroke="#76b900" stroke-width="1.4"/><circle cx="8" cy="8" r="1.800" fill="#76b900"/></svg>
            <svg viewBox="0 0 16 16"><path d="M1 3 8 0 15 3V11L8 16 1 11z" fill="#c6222c"/><path d="M4 4.500 8 7 12 4.500V10L8 13 4 10z" fill="#5a2018"/></svg>
            <svg viewBox="0 0 16 16"><circle cx="12" cy="3" r="2" fill="#5059c9"/><circle cx="8" cy="2.500" r="2.200" fill="#7b83eb"/><rect y="4" width="10" height="10" rx="1" fill="#4b53bc"/><path d="M2.500 6.500H7.500M5 6.500V12" stroke="#fff" stroke-width="1.3"/><circle cx="12" cy="12" r="3.800" fill="#6bb700"/></svg>
            <svg viewBox="0 0 16 16"><circle cx="8" cy="8" r="8" fill="#111"/><path d="M11 4.500C8 2.500 4.500 4.500 4.500 8S8 13.500 11 11.500V8H8" fill="none" stroke="#e8e8e8" stroke-width="1.5"/></svg>
            <svg viewBox="0 0 16 16"><path d="M8 0 15 2.500V8C15 12 12 15 8 16 4 15 1 12 1 8V2.500z" fill="#f2f2f2"/><path d="M8 0V8H1V2.500zM8 8H15C15 12 12 15 8 16z" fill="#111"/><circle cx="12" cy="12" r="4" fill="#10893e"/></svg>
            <svg viewBox="0 0 16 10"><path d="M3.500 10C.5 10 .5 6.200 3 6 3.500 3 6 1 8.500 1.500 11 2 12 4 12 5 15 5 16.500 10 12.500 10z" fill="#e8e8e8"/></svg>
            <svg viewBox="0 0 16 16"><path d="M5 3H15V12H5zM1 1H6V5H1zM7 12V15M4 15H12" fill="none" stroke="#fff"/></svg>
            <svg viewBox="0 0 16 16"><path d="M1 5.500H4L7.500 2.500V13.500L4 10.500H1z" fill="none" stroke="#fff"/><path d="M10 5C11 7 11 9 10 11M12.500 3.500C14.500 6 14.500 10 12.500 12.500" fill="none" stroke="#d8c8c8"/></svg>
        </div>
        <div class="clock"><span>20:54</span><span>11.10.2021</span></div>
        <div class="notify"><svg viewBox="0 0 16 16"><path d="M1 1.500H15V12H10L8 14.500 6 12H1z" fill="none" stroke="#fff"/></svg></div>
    </div>
</body>
</html>
```

FILE: styles.css
```css
* {
    box-sizing: border-box;
}

body {
    margin: 0;
    width: 1917px;
    height: 1079px;
    overflow: hidden;
    display: flex;
    flex-direction: column;
    background: #191919;
    color: #bfbfbf;
    font-family: Inter, "Noto Sans", sans-serif;
    font-size: 12px;
}

.defs {
    width: 0;
    height: 0;
    display: none;
}

svg {
    display: block;
    flex: none;
}

b {
    font-weight: 600;
}

/* title, menu */
.titlebar {
    height: 23px;
    background: #e81123;
    color: #fff;
    display: flex;
    align-items: center;
    font-family: "Open Sans", "Noto Sans", sans-serif;
    font-size: 12px;
    letter-spacing: -.3px;
    padding-left: 3px;
}

.app-icon {
    width: 16px;
    height: 16px;
    color: #eee;
    margin-right: 4px;
}

.win-controls {
    margin-left: auto;
    display: flex;
    gap: 34px;
    padding-right: 16px;
}

.win-controls svg {
    width: 12px;
    height: 12px;
}

.menubar {
    height: 20px;
    background: #fff;
    border-bottom: 1px solid #f0f0f0;
    color: #000;
    display: flex;
    align-items: center;
    font-family: "Open Sans", "Noto Sans", sans-serif;
    font-size: 12px;
    letter-spacing: -.3px;
    padding-left: 7px;
    gap: 13.75px;
}

/* main toolbar */
.toolbar {
    height: 30px;
    background: #191919;
    display: flex;
    align-items: center;
    padding: 0 6px 0 9px;
}

.tool-group {
    display: flex;
    gap: 1px;
}

.tool {
    width: 31px;
    height: 21px;
    background: #383838;
    border-radius: 2px;
    display: flex;
    align-items: center;
    justify-content: center;
    color: #c4c4c4;
}

.tool svg {
    width: 16px;
    height: 16px;
}

.tool.active {
    background: #6a6a6a;
}

.tool.active svg {
    width: 18px;
    height: 18px;
}

.tool.wide {
    width: 62px;
    gap: 2px;
}

.tool.snap {
    width: 30px;
    margin-left: 2px;
    background: #2d2d2d;
}

.pivot-group {
    margin-left: 10px;
}

.play-group {
    margin-left: 492px;
    gap: 4px;
}

.play-group .tool {
    width: 28px;
    background: #2e2e2e;
}

.play-group .tool svg {
    width: 11px;
    height: 11px;
}

.right-group {
    margin-left: auto;
    gap: 10px;
}

.menu-btn {
    width: 78px;
    padding: 0 5px;
    justify-content: flex-start;
    gap: 2px;
}

.menu-btn .arrow {
    margin-left: auto;
    margin-right: 4px;
}

.collab {
    width: 76px;
}

.collab svg {
    width: 13px;
    height: 13px;
    margin-right: 1px;
}

.collab .arrow {
    margin: 0 0 0 2px;
}

.cloud {
    width: 30px;
}

.arrow {
    display: inline-block;
    flex: none;
    width: 0;
    height: 0;
    border-left: 4px solid transparent;
    border-right: 4px solid transparent;
    border-top: 5px solid #c4c4c4;
}

/* docked panels */
.workspace {
    flex: 1;
    display: flex;
    gap: 2px;
    min-height: 0;
}

.left-col {
    width: 1432px;
    display: flex;
    flex-direction: column;
    gap: 1px;
}

.top-row {
    height: 572px;
    display: flex;
    gap: 2px;
}

.tabs {
    height: 19px;
    background: #282828;
    display: flex;
    align-items: stretch;
    flex: none;
}

.tab {
    display: flex;
    align-items: center;
    gap: 5px;
    padding: 0 12px 0 8px;
    color: #bdbdbd;
}

.tab.active {
    background: #3c3c3c;
    border-top: 1px solid #2c5d87;
}

.tab-icon {
    width: 11px;
    height: 11px;
}

.tab-icon.pad {
    width: 14px;
    height: 10px;
}

.tab-tools {
    margin-left: auto;
    display: flex;
    align-items: center;
    gap: 8px;
    padding-right: 10px;
}

.ico-lock {
    width: 11px;
    height: 11px;
    color: #c4c4c4;
}

.ico-kebab {
    width: 4px;
    height: 12px;
    color: #c4c4c4;
}

.push {
    margin-left: auto;
}

.panel-bar {
    height: 21px;
    background: #3c3c3c;
    border-bottom: 1px solid #232323;
    display: flex;
    align-items: center;
    flex: none;
}

.plus {
    font-size: 23px;
    line-height: 20px;
    font-weight: 500;
    color: #d0d0d0;
    margin-left: 6px;
    margin-right: 3px;
}

.panel-bar .arrow {
    border-left-width: 3px;
    border-right-width: 3px;
    border-top-width: 4px;
}

.search {
    height: 17px;
    background: #2a2a2a;
    border: 1px solid #212121;
    border-radius: 4px;
    display: flex;
    align-items: center;
    gap: 5px;
    padding-left: 5px;
    color: #6e6e6e;
}

.ico-smag {
    width: 10px;
    height: 10px;
    color: #b0b0b0;
}

/* hierarchy */
.hierarchy {
    width: 353px;
    display: flex;
    flex-direction: column;
    background: #383838;
}

.hierarchy .tab {
    padding-left: 7px;
}

.hierarchy .panel-bar .search {
    margin-left: 9px;
    width: 306px;
}

.tree {
    flex: 1;
    background: linear-gradient(to right, #313131 32px, #383838 32px);
}

.scene-row {
    height: 16px;
    background: #4d4d4d;
    border-bottom: 1px solid #2b2b2b;
    display: flex;
    align-items: center;
    padding-right: 10px;
}

.scene-row b {
    margin-left: 3px;
    color: #d0d0d0;
}

.scene-row .ico-vis {
    margin-left: 18px;
}

.scene-row .tri {
    margin-left: 3px;
}

.scene-row .ico-16 {
    margin-left: 2px;
    color: #d0d0d0;
}

.ico-vis {
    width: 14px;
    height: 14px;
}

.ico-16 {
    width: 16px;
    height: 16px;
    color: #c0c0c0;
}

.go-row {
    height: 16px;
    display: flex;
    align-items: center;
    padding: 0 3px 1px 0;
    gap: 3px;
}

.go-row .gutter {
    width: 57px;
    height: 15px;
    display: flex;
    align-items: center;
    padding-left: 18px;
    flex: none;
}

.go-row.prefab .gutter {
    width: 46px;
}

.go-row.prefab {
    color: #7ba9e6;
}

.go-row.selected {
    background: linear-gradient(to right, #334f73 32px, #2c5d87 32px);
    color: #e0e0e0;
}

.chev {
    width: 8px;
    height: 12px;
}

.tri {
    display: inline-block;
    flex: none;
    width: 0;
    height: 0;
}

.tri.down {
    border-left: 4px solid transparent;
    border-right: 4px solid transparent;
    border-top: 7px solid #707070;
}

.tri.right {
    border-top: 4px solid transparent;
    border-bottom: 4px solid transparent;
    border-left: 7px solid #707070;
}

/* scene */
.scene {
    width: 1077px;
    display: flex;
    flex-direction: column;
}

.scene-tab {
    width: 77px;
    padding-left: 8px;
}

.game-tab {
    padding-left: 7px;
    padding-right: 24px;
}

.store-tab {
    padding-left: 0;
}

.bar-item {
    height: 20px;
    display: flex;
    align-items: center;
    justify-content: center;
    gap: 3px;
    background: #3c3c3c;
    border-right: 1px solid #2b2b2b;
}

.ico-14 {
    width: 14px;
    height: 14px;
}

.shaded {
    width: 122px;
    justify-content: space-between;
    padding: 0 4px;
}

.two-d {
    width: 31px;
    font-size: 11px;
    font-weight: 600;
    margin-left: 3px;
}

.lamp {
    width: 27px;
    background: #4f4f4f;
    margin-left: 2px;
}

.audio,
.fx {
    width: 25px;
}

.fx-arrow {
    width: 15px;
}

.hidden-count {
    width: 37px;
}

.ico-hidden {
    width: 16px;
    height: 12px;
    color: #9a9a9a;
}

.grid-btn {
    width: 23px;
}

.tools-btn {
    width: 25px;
    margin-right: 6px;
    color: #d0d0d0;
    border-left: 1px solid #2b2b2b;
}

.cam-btn {
    width: 30px;
    justify-content: flex-start;
    padding-left: 1px;
    gap: 5px;
}

.cam-btn .ico-14 {
    width: 12px;
}

.gizmos {
    width: 68px;
    background: #4a4a4a;
    padding: 0 3px;
    justify-content: space-between;
}

.bar-sep {
    width: 1px;
    height: 14px;
    background: #777;
    margin-left: 2px;
}

.scene-search {
    width: 204px;
    margin: 0 3px 0 9px;
}

.viewport {
    position: relative;
    flex: 1;
    overflow: hidden;
}

.scene-view {
    width: 1077px;
    height: 532px;
}

.sky {
    fill: url(#sky);
}

.ground {
    fill: #4b361d;
}

.fog {
    fill: url(#fog);
}

.floor-lines {
    fill: none;
    stroke: #8d7f6c;
    stroke-opacity: .4;
    stroke-width: 1;
    shape-rendering: crispEdges;
}

.blocks rect {
    fill: #6c7471;
    stroke: #636a68;
    stroke-width: .7;
}

.plane {
    fill: url(#planeFill);
}

.plane-grid {
    fill: none;
    stroke: #43535e;
    stroke-opacity: .5;
    stroke-width: 1;
}

.box-faint {
    fill: none;
    stroke: #9fe08c;
    stroke-opacity: .35;
    shape-rendering: crispEdges;
}

.box-edge {
    fill: none;
    stroke: #9df07c;
    stroke-width: 1;
    shape-rendering: crispEdges;
}

.plane-outline {
    fill: none;
    stroke: #ff6400;
    stroke-width: 3;
}

.cam-gizmo {
    fill: #fff;
}

.giz-y {
    fill: #8fde2c;
}

.giz-x {
    fill: #e13c1e;
}

.giz-w {
    fill: #f2f2f2;
}

.giz-label {
    position: absolute;
    color: #e8e8e8;
    font-size: 11px;
    line-height: 11px;
}

.giz-y-label {
    left: 1023px;
    top: 10px;
}

.giz-x-label {
    left: 1057px;
    top: 46px;
}

.giz-lock {
    position: absolute;
    left: 1057px;
    top: 12px;
    width: 8px;
    height: 11px;
}

.persp {
    position: absolute;
    left: 1002px;
    top: 93px;
    display: flex;
    align-items: center;
    gap: 1px;
    font-size: 12px;
    color: #d8d8d8;
}

.persp svg {
    width: 8px;
    height: 10px;
}

/* project */
.project {
    flex: 1;
    display: flex;
    flex-direction: column;
    min-height: 0;
}

.project .tabs {
    height: 18px;
}

.project-tab {
    width: 80px;
    padding-left: 6px;
    gap: 4px;
}

.console-tab {
    padding-left: 10px;
    padding-right: 24px;
}

.plastic-tab {
    padding-left: 0;
}

.ico-folder {
    width: 13px;
    height: 11px;
    color: #c4c4c4;
}

.project-search {
    width: 300px;
    margin-left: auto;
    margin-right: 2px;
}

.filter {
    width: 26px;
    height: 20px;
    border-left: 1px solid #2b2b2b;
    display: flex;
    align-items: center;
    justify-content: center;
    gap: 1px;
}

.filter.count {
    width: 40px;
}

.project-body {
    flex: 1;
    display: flex;
    min-height: 0;
}

.folders {
    width: 230px;
    background: #383838;
    border-right: 1px solid #232323;
}

.folder-row {
    height: 16px;
    display: flex;
    align-items: center;
}

.folder-row.root {
    padding-left: 5px;
    gap: 5px;
}

.folder-row.root b {
    color: #c8c8c8;
}

.folder-row.sub {
    padding-left: 32px;
    gap: 4px;
}

.folder-row.current {
    background: #4d4d4d;
}

.folder-gap {
    height: 15px;
}

.ico-star {
    width: 13px;
    height: 13px;
}

.ico-mag {
    width: 12px;
    height: 12px;
    color: #b8b8b8;
}

.assets {
    flex: 1;
    display: flex;
    flex-direction: column;
    background: #333;
}

.crumbs {
    height: 21px;
    background: #3c3c3c;
    border-bottom: 1px solid #2b2b2b;
    display: flex;
    align-items: center;
    gap: 5px;
    padding-left: 3px;
}

.crumbs b {
    color: #c8c8c8;
}

.asset-grid {
    flex: 1;
    padding: 15px 0 0 9px;
}

.asset {
    width: 72px;
    display: flex;
    flex-direction: column;
    align-items: center;
    gap: 7px;
    font-size: 10px;
}

.asset-cube {
    width: 52px;
    height: 56px;
}

.asset-foot {
    height: 18px;
    background: #3c3c3c;
    border-top: 1px solid #2b2b2b;
    display: flex;
    align-items: center;
    justify-content: flex-end;
    padding: 0 16px 2px 0;
}

.slider {
    position: relative;
    width: 55px;
    height: 2px;
    background: #6a6a6a;
}

.slider i {
    position: absolute;
    left: 27px;
    top: -4px;
    width: 10px;
    height: 10px;
    background: #b4b4b4;
    border-radius: 50%;
}

/* inspector */
.inspector {
    width: 483px;
    background: #383838;
    display: flex;
    flex-direction: column;
    overflow: hidden;
}

.inspector-tab {
    width: 92px;
    padding-left: 7px;
}

.object-head {
    height: 59px;
    background: #3c3c3c;
    flex: none;
    padding-top: 9px;
}

.object-line {
    height: 17px;
    display: flex;
    align-items: center;
}

.cube-wrap {
    position: relative;
    width: 30px;
    height: 17px;
    flex: none;
}

.object-cube {
    width: 22px;
    height: 22px;
    margin: 2px 0 0 7px;
    color: #c4c4c4;
}

.cube-arrow {
    position: absolute;
    left: 27px;
    top: 22px;
    border-left-width: 3px;
    border-right-width: 3px;
    border-top-width: 4px;
}

.object-line .check {
    margin-left: 16px;
}

.name-field {
    width: 349px;
    margin-left: 5px;
    flex: none;
    color: #e0e0e0;
}

.object-line .static-check {
    margin-left: 4px;
}

.static-label {
    margin-left: 3px;
}

.object-line > .arrow {
    margin-left: 1px;
    border-left-width: 3px;
    border-right-width: 3px;
}

.tag-line {
    display: flex;
    align-items: center;
    height: 17px;
    margin-top: 8px;
    padding-left: 43px;
}

.tag-drop {
    width: 185px;
    margin-left: 6px;
}

.layer-label {
    margin-left: 15px;
}

.layer-drop {
    width: 175px;
    margin-left: 5px;
}

.comp {
    border-top: 1px solid #1f1f1f;
    flex: none;
}

.comp-head {
    height: 20px;
    background: #3e3e3e;
    border-bottom: 1px solid #2b2b2b;
    display: flex;
    align-items: center;
    padding: 2px 0 0 6px;
    color: #c8c8c8;
}

.comp-icon {
    width: 14px;
    height: 14px;
    margin-left: 6px;
}

.mesh-blue {
    color: #7dd0fa;
}

.mesh-green {
    color: #a4e06a;
}

.comp-check {
    display: block;
    width: 14px;
    height: 14px;
    margin-left: 6px;
    flex: none;
}

.comp-head b {
    margin-left: 6px;
}

.comp-tools,
.mat-tools {
    margin-left: auto;
    display: flex;
    align-items: center;
    justify-content: flex-end;
    gap: 8px;
    padding-right: 8px;
}

.comp-tools .ico-kebab {
    margin-left: 4px;
}

.ico-help,
.ico-slide,
.ico-gear {
    width: 12px;
    height: 12px;
    color: #c0c0c0;
}

.comp-body {
    display: flex;
    flex-direction: column;
}

.transform-body {
    padding: 5px 0;
}

.filter-body {
    padding: 6px 2px 7px 19px;
}

.filter-body .row {
    padding: 0 0 2px;
}

.first-row {
    margin-top: 3px;
}

.renderer-body {
    padding: 5px 0;
}

.collider-body {
    padding: 5px 0 4px;
}

.row {
    height: 20px;
    display: flex;
    align-items: center;
    padding: 0 2px 2px 19px;
}

.row label {
    width: 180px;
    flex: none;
    overflow: hidden;
    white-space: nowrap;
}

.row.lvl {
    padding-left: 34px;
}

.row.lvl label {
    width: 165px;
}

.row.fold {
    padding-left: 6px;
    color: #c8c8c8;
}

.row.fold b {
    margin-left: 6px;
}

.row.dim label {
    color: #6f6f6f;
}

.xyz {
    flex: 1;
    display: flex;
    align-items: center;
}

.xyz em {
    font-style: normal;
    width: 12px;
    flex: none;
    color: #b0b0b0;
}

.xyz .field {
    width: 80px;
    flex: none;
    margin-right: 4px;
}

.xyz .field:last-child {
    margin-right: 0;
}

.field {
    height: 17px;
    flex: 1;
    background: #2a2a2a;
    border: 1px solid #212121;
    border-radius: 3px;
    padding-left: 2px;
    line-height: 15px;
    color: #d2d2d2;
    overflow: hidden;
}

.grow {
    flex: 1;
}

.drop {
    position: relative;
    height: 17px;
    background: #515151;
    border: 1px solid #303030;
    border-top-color: #656565;
    border-radius: 3px;
    padding-left: 3px;
    line-height: 14px;
    color: #e4e4e4;
}

.drop::after {
    content: "";
    position: absolute;
    right: 5px;
    top: 6px;
    border-left: 4px solid transparent;
    border-right: 4px solid transparent;
    border-top: 4px solid #c4c4c4;
}

.drop.off {
    background: #464646;
    border-color: #3c3c3c;
    color: #757575;
}

.drop.off::after {
    border-top-color: #757575;
}

.obj {
    flex: 1;
    height: 18px;
    background: #2a2a2a;
    border: 1px solid #212121;
    border-radius: 3px;
    display: flex;
    align-items: center;
    padding-left: 3px;
    gap: 2px;
    color: #6f6f6f;
}

.obj.bright {
    color: #d2d2d2;
}

.none {
    padding-left: 0;
}

.obj-mesh {
    width: 11px;
    height: 11px;
    color: #3d6f88;
}

.obj-ball {
    width: 11px;
    height: 11px;
}

.target {
    margin-left: auto;
    width: 18px;
    height: 16px;
    background: #3a3a3a;
    border-radius: 0 3px 3px 0;
    display: flex;
    align-items: center;
    justify-content: center;
    color: #c0c0c0;
}

.target svg {
    width: 10px;
    height: 10px;
}

.dim .target {
    background: none;
    color: #6f6f6f;
}

.check {
    display: block;
    width: 14px;
    height: 14px;
    background: #2a2a2a;
    border: 1px solid #212121;
    border-radius: 2px;
    flex: none;
}

.check svg {
    width: 10px;
    height: 10px;
    margin: 1px;
}

.wide-btn {
    height: 17px;
    background: #585858;
    border: 1px solid #303030;
    border-radius: 3px;
    text-align: center;
    line-height: 15px;
    color: #e4e4e4;
}

.note {
    height: 16px;
    margin-top: 4px;
    background: #3a3a3a;
    border: 1px solid #232323;
    border-radius: 3px;
    padding-left: 3px;
    font-size: 10px;
    letter-spacing: .15px;
    line-height: 14px;
}

.helpbox {
    height: 38px;
    background: #3a3a3a;
    border: 1px solid #232323;
    border-radius: 3px;
    display: flex;
    align-items: center;
    padding-left: 5px;
}

.help-bubble {
    width: 26px;
    height: 28px;
}

.helpbox p {
    margin: 0 0 0 5px;
    font-size: 10px;
    letter-spacing: .05px;
    line-height: 12px;
    width: 428px;
}

.material {
    height: 55px;
    display: flex;
    padding: 6px 2px 0 17px;
    border-bottom: 1px solid #2b2b2b;
    background: #3a3a3a;
}

.mat-thumb {
    width: 32px;
    flex: none;
}

.sphere {
    width: 32px;
    height: 32px;
}

.mat-thumb .tri {
    margin: 1px 0 0 -9px;
    display: block;
}

.mat-body {
    flex: 1;
    padding-left: 4px;
}

.mat-title {
    display: flex;
    align-items: center;
    height: 16px;
    color: #6f6f6f;
    font-size: 13px;
    padding-left: 3px;
}

.mat-tools {
    gap: 4px;
    padding-right: 0;
    margin-right: -3px;
}

.mat-tools svg {
    color: #bcbcbc;
}

.mat-shader {
    display: flex;
    align-items: center;
    margin-top: 7px;
    color: #6f6f6f;
}

.shader-drop {
    margin-left: 11px;
}

.add-wrap {
    flex: 1;
    border-top: 1px solid #1f1f1f;
    margin-top: 8px;
    padding: 9px 0 0 2px;
    display: flex;
    justify-content: center;
    align-items: flex-start;
}

.add-btn {
    width: 228px;
    height: 23px;
    background: #515151;
    border: 1px solid #303030;
    border-radius: 3px;
    text-align: center;
    line-height: 21px;
    color: #e4e4e4;
}

/* status */
.statusbar {
    height: 22px;
    background: #191919;
    flex: none;
    display: flex;
    align-items: center;
    justify-content: flex-end;
    padding-right: 25px;
    gap: 8px;
    letter-spacing: -.1px;
}

.progress {
    width: 185px;
    height: 17px;
    background: #2b2b2b;
    border-left: 2px solid #2a5a8a;
}

/* windows taskbar */
.taskbar {
    height: 39px;
    background: linear-gradient(to right, #57252c, #4f2326 50%, #4a1f17);
    flex: none;
    display: flex;
    align-items: center;
    padding-right: 8px;
    color: #fff;
    font-family: "Open Sans", "Noto Sans", sans-serif;
}

.start {
    width: 48px;
    display: flex;
    justify-content: center;
}

.start svg {
    width: 16px;
    height: 16px;
}

.task-search {
    width: 344px;
    height: 39px;
    background: #6e3339;
    border: 1px solid #8a5a5a;
    border-bottom: none;
    display: flex;
    align-items: center;
    padding-left: 11px;
    gap: 10px;
    font-size: 14px;
    color: #e8dcdc;
}

.task-search svg {
    width: 18px;
    height: 18px;
}

.slot {
    width: 49px;
    height: 39px;
    display: flex;
    align-items: center;
    justify-content: center;
}

.slot svg {
    width: 22px;
    height: 22px;
}

.cortana svg {
    width: 16px;
    height: 16px;
}

.slot.task-view svg {
    width: 16px;
    height: 16px;
    margin-right: 4px;
}

.slot.lit {
    box-shadow: inset 0 -2px 0 -1px #e8a0a8;
}

.slot.active-app {
    background: #941a28;
}

.slot.active-app svg {
    width: 24px;
    height: 24px;
}

.weather {
    margin-left: auto;
    display: flex;
    align-items: center;
    font-size: 12.5px;
}

.weather svg {
    width: 20px;
    height: 22px;
    margin-right: 10px;
}

.cond {
    margin-left: 13px;
}

.tray {
    display: flex;
    align-items: center;
    gap: 8px;
    margin-left: 14px;
}

.tray svg {
    width: 16px;
    height: 16px;
}

.tray-unity {
    color: #fff;
}

.clock {
    width: 60px;
    margin-left: 7px;
    display: flex;
    flex-direction: column;
    align-items: center;
    font-size: 12px;
    letter-spacing: -.2px;
    line-height: 18px;
}

.notify {
    width: 46px;
    display: flex;
    justify-content: center;
}

.notify svg {
    width: 16px;
    height: 16px;
}
```
